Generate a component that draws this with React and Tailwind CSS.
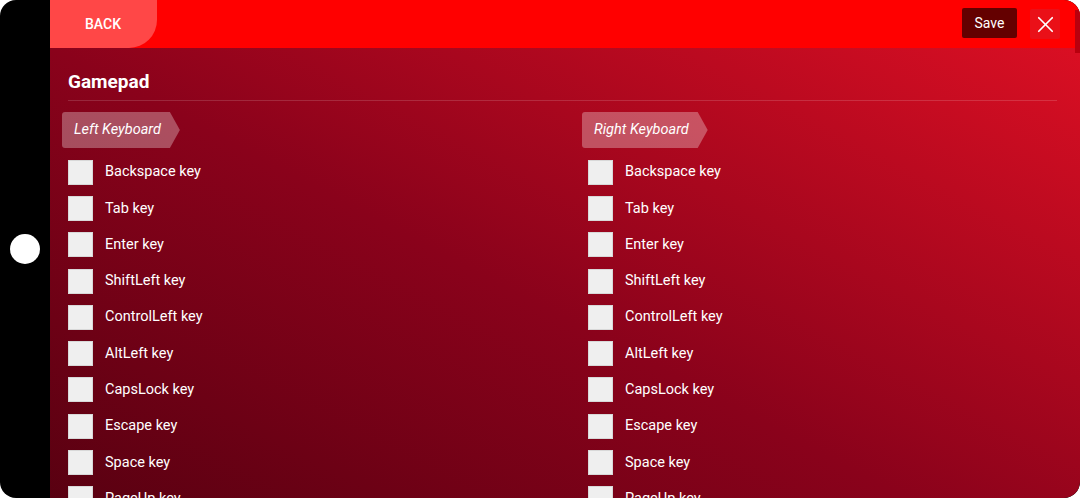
import React from 'react';
import { X } from 'lucide-react';

const keys = [
  'Backspace', 'Tab', 'Enter', 'ShiftLeft', 'ControlLeft', 'AltLeft',
  'CapsLock', 'Escape', 'Space', 'PageUp', 'PageDown', 'End',
];

const KeyColumn = ({ title, className }) => (
  <div className={className}>
    <div className="ml-[-6px] mt-[11px] h-9 inline-flex items-center pl-3 pr-[19px] bg-white/30 rounded-l-[3px] italic text-[14.5px] text-white [clip-path:polygon(0_0,calc(100%-10px)_0,100%_50%,calc(100%-10px)_100%,0_100%)]">
      {title}
    </div>
    <div className="mt-[6px]">
      {keys.map((k) => (
        <div key={k} className="h-[36.3px] flex items-center gap-3">
          <div className="w-[25px] h-[25px] bg-[#efefef] border border-[#d8d8d8]" />
          <span className="text-[14.5px] text-white">{k} key</span>
        </div>
      ))}
    </div>
  </div>
);

export default function App() {
  return (
    <div className="w-[1080px] h-[498px] bg-white overflow-hidden font-['Roboto',sans-serif]">
      <div className="w-full h-full rounded-[16px] overflow-hidden bg-black flex relative">
        {/* side strip */}
        <div className="w-[50px] shrink-0 flex items-center justify-center">
          <div className="w-[30px] h-[30px] rounded-full bg-white" />
        </div>

        {/* panel */}
        <div className="flex-1 flex flex-col rounded-br-[16px] overflow-hidden">
          <div className="h-12 shrink-0 bg-[#ff0000] flex items-center">
            <button className="h-12 w-[107px] bg-[#ff4747] rounded-br-[28px] text-white font-medium text-[14px] pl-[35px] text-left">
              BACK
            </button>
            <div className="flex-1" />
            <button className="h-[30px] w-[55px] bg-[#640000] rounded-[2px] text-white text-[14px] mb-[2px]">
              Save
            </button>
            <button className="ml-[13px] mr-[20px] w-[30px] h-[30px] bg-[#ea1018] rounded-[2px] flex items-center justify-center text-white">
              <X size={27} strokeWidth={1.5} />
            </button>
          </div>

          <div className="flex-1 bg-[linear-gradient(to_top_right,#4f000f,#8a021b_50%,#da0f23)] px-[18px] pt-[22px]">
            <h1 className="text-[19px] font-bold text-white leading-6">Gamepad</h1>
            <div className="mt-[6px] mr-[5px] border-t border-white/15" />
            <div className="flex">
              <KeyColumn title="Left Keyboard" className="w-[520px] shrink-0" />
              <KeyColumn title="Right Keyboard" className="flex-1" />
            </div>
          </div>
        </div>

        {/* scroll thumb */}
        <div className="absolute right-0 top-[10px] w-[5px] h-[43px] bg-[#b8000e]" />
      </div>
    </div>
  );
}
